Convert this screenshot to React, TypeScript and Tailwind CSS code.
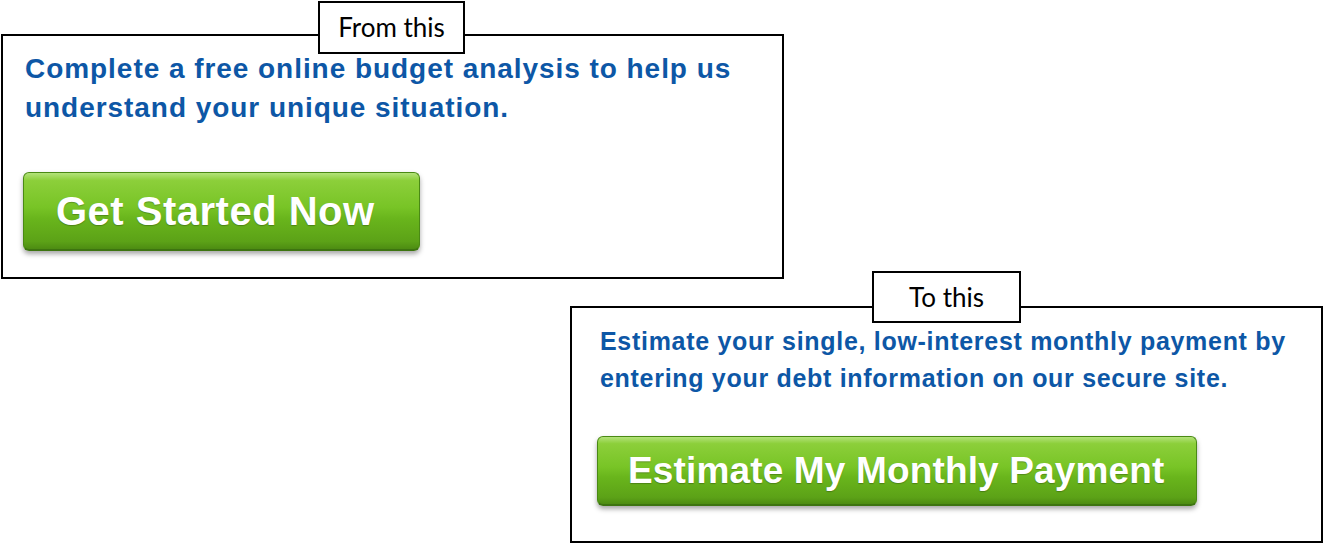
import React from "react";

type PanelProps = {
  label: string;
  text: React.ReactNode;
  cta: string;
  variant: "from" | "to";
};

const GreenButton = ({ children, size }: { children: React.ReactNode; size: "lg" | "md" }) => {
  const sizing =
    size === "lg"
      ? "w-[397px] h-[79px] pl-[32px] text-[40px] tracking-[0.5px]"
      : "w-[600px] h-[70px] pl-[30px] text-[37px] tracking-[0.15px]";
  return (
    <button
      type="button"
      className={`${sizing} flex items-center rounded-[6px] border border-[#4a8a14] border-b-2 border-b-[#3d7410] bg-[linear-gradient(180deg,#b3e27a_0%,#8ccf3a_10%,#78c426_45%,#69b51c_60%,#5ca217_90%,#4d8c12_100%)] shadow-[0_3px_5px_rgba(0,0,0,0.35)] font-bold text-white [text-shadow:0_1px_1px_rgba(0,0,0,0.25)]`}
      style={{ fontFamily: '"Liberation Sans", Arial, sans-serif' }}
    >
      {children}
    </button>
  );
};

const Panel = ({ label, text, cta, variant }: PanelProps) => {
  const isFrom = variant === "from";
  return (
    <div
      className={
        isFrom
          ? "relative ml-px w-[783px] h-[245px] border-2 border-black bg-white pl-[22px] pt-[13px]"
          : "relative ml-[570px] mt-[27px] w-[753px] h-[237px] border-2 border-black bg-white pl-[28px] pt-[15px]"
      }
    >
      <div
        className={
          isFrom
            ? "absolute left-[315px] top-[-35px] w-[147px] h-[53px] border-2 border-black bg-white flex items-center justify-center text-[26px]"
            : "absolute left-[300px] top-[-37px] w-[149px] h-[52px] border-2 border-black bg-white flex items-center justify-center text-[26px]"
        }
        style={{ fontFamily: "Lato, 'Open Sans', sans-serif" }}
      >
        {label}
      </div>

      <p
        className={
          isFrom
            ? "text-[28px] leading-[39px] tracking-[0.95px] font-bold text-[#0d57a6]"
            : "text-[25px] leading-[37px] tracking-[0.7px] font-bold text-[#0d57a6]"
        }
        style={{ fontFamily: '"Liberation Sans", Arial, sans-serif' }}
      >
        {text}
      </p>

      <div className={isFrom ? "mt-[45px] -ml-[2px]" : "mt-[39px] -ml-[3px]"}>
        <GreenButton size={isFrom ? "lg" : "md"}>{cta}</GreenButton>
      </div>
    </div>
  );
};

export default function App() {
  return (
    <div className="w-[1324px] h-[544px] bg-white pt-[34px] overflow-hidden">
      <Panel
        variant="from"
        label="From this"
        text={
          <>
            Complete a free online budget analysis to help us
            <br />
            understand your unique situation.
          </>
        }
        cta="Get Started Now"
      />
      <Panel
        variant="to"
        label="To this"
        text={
          <>
            Estimate your single, low-interest monthly payment by
            <br />
            entering your debt information on our secure site.
          </>
        }
        cta="Estimate My Monthly Payment"
      />
    </div>
  );
}
